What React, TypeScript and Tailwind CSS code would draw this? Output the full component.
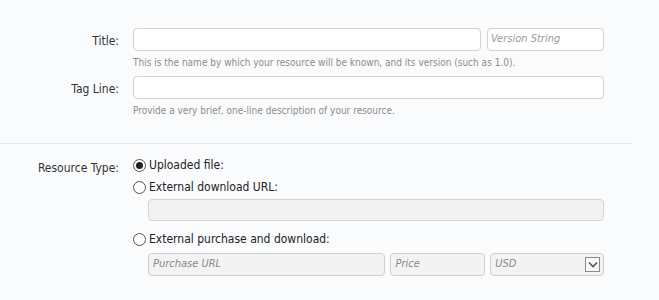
export default function App() {
  const input =
    "h-[23px] rounded-[4px] border border-[#d3d3d3] bg-white pl-[3px] text-[11px] italic text-[#9a9a9a] outline-none";
  const grayInput =
    "h-[23px] rounded-[4px] border border-[#cfcfcf] bg-[#f3f3f3] pl-[4px] text-[11px] italic text-[#8a8a8a] outline-none";

  return (
    <div className="h-[300px] w-[659px] bg-[#fafbfd] font-['DejaVu_Sans','Liberation_Sans',sans-serif] [font-stretch:condensed] text-[#333]">
      <div className="pt-[28px]">
        {/* title */}
        <div className="flex">
          <div className="w-[119px] pt-[4px] text-right text-[12px] text-[#333]">Title:</div>
          <div className="ml-[14px] w-[471px]">
            <div className="flex gap-[6px]">
              <div className={`${input} flex-1`} />
              <div className={`${input} flex w-[117px] items-center`}>Version String</div>
            </div>
            <p className="mt-[4px] text-[10px] text-[#8c8c8c]">
              This is the name by which your resource will be known, and its version (such as 1.0).
            </p>
          </div>
        </div>

        {/* tag line */}
        <div className="mt-[6px] flex">
          <div className="w-[119px] pt-[4px] text-right text-[12px] text-[#333]">Tag Line:</div>
          <div className="ml-[14px] w-[471px]">
            <div className={`${input} w-full`} />
            <p className="mt-[4px] text-[10px] text-[#8c8c8c]">
              Provide a very brief, one-line description of your resource.
            </p>
          </div>
        </div>
      </div>

      <div className="mt-[25px] h-px w-[632px] bg-[#dcebef]" />

      <div className="mt-[14px] flex">
        <div className="w-[119px] pt-[1px] text-right text-[12px] text-[#333]">Resource Type:</div>
        <div className="ml-[14px] w-[471px] text-[12px] text-[#222]">
          <Radio checked label="Uploaded file:" />
          <div className="mt-[8px]">
            <Radio label="External download URL:" />
          </div>
          <div className="ml-[15px] mt-[5px] h-[22px] rounded-[4px] border border-[#d4d4d4] bg-[#f2f2f2]" />
          <div className="mt-[11px]">
            <Radio label="External purchase and download:" />
          </div>
          <div className="ml-[15px] mt-[7px] flex gap-[5px]">
            <div className={`${grayInput} flex w-[238px] items-center`}>Purchase URL</div>
            <div className={`${grayInput} flex w-[95px] items-center`}>Price</div>
            <div className={`${grayInput} flex w-[114px] items-center justify-between pr-[3px]`}>
              <span>USD</span>
              <span className="flex h-[15px] w-[15px] items-center justify-center border border-[#8a8a8a] bg-[#f7f7f7]">
                <svg width="10" height="7" viewBox="0 0 10 7">
                  <path d="M1 1.5 L5 5.5 L9 1.5" fill="none" stroke="#555" strokeWidth="1.6" />
                </svg>
              </span>
            </div>
          </div>
        </div>
      </div>
    </div>
  );
}

function Radio({ label, checked }: { label: string; checked?: boolean }) {
  return (
    <div className="flex h-[14px] items-center">
      <span className="mr-[3px] flex h-[13px] w-[13px] items-center justify-center rounded-full border border-[#555] bg-white">
        {checked && <span className="h-[7px] w-[7px] rounded-full bg-[#222]" />}
      </span>
      <span>{label}</span>
    </div>
  );
}
